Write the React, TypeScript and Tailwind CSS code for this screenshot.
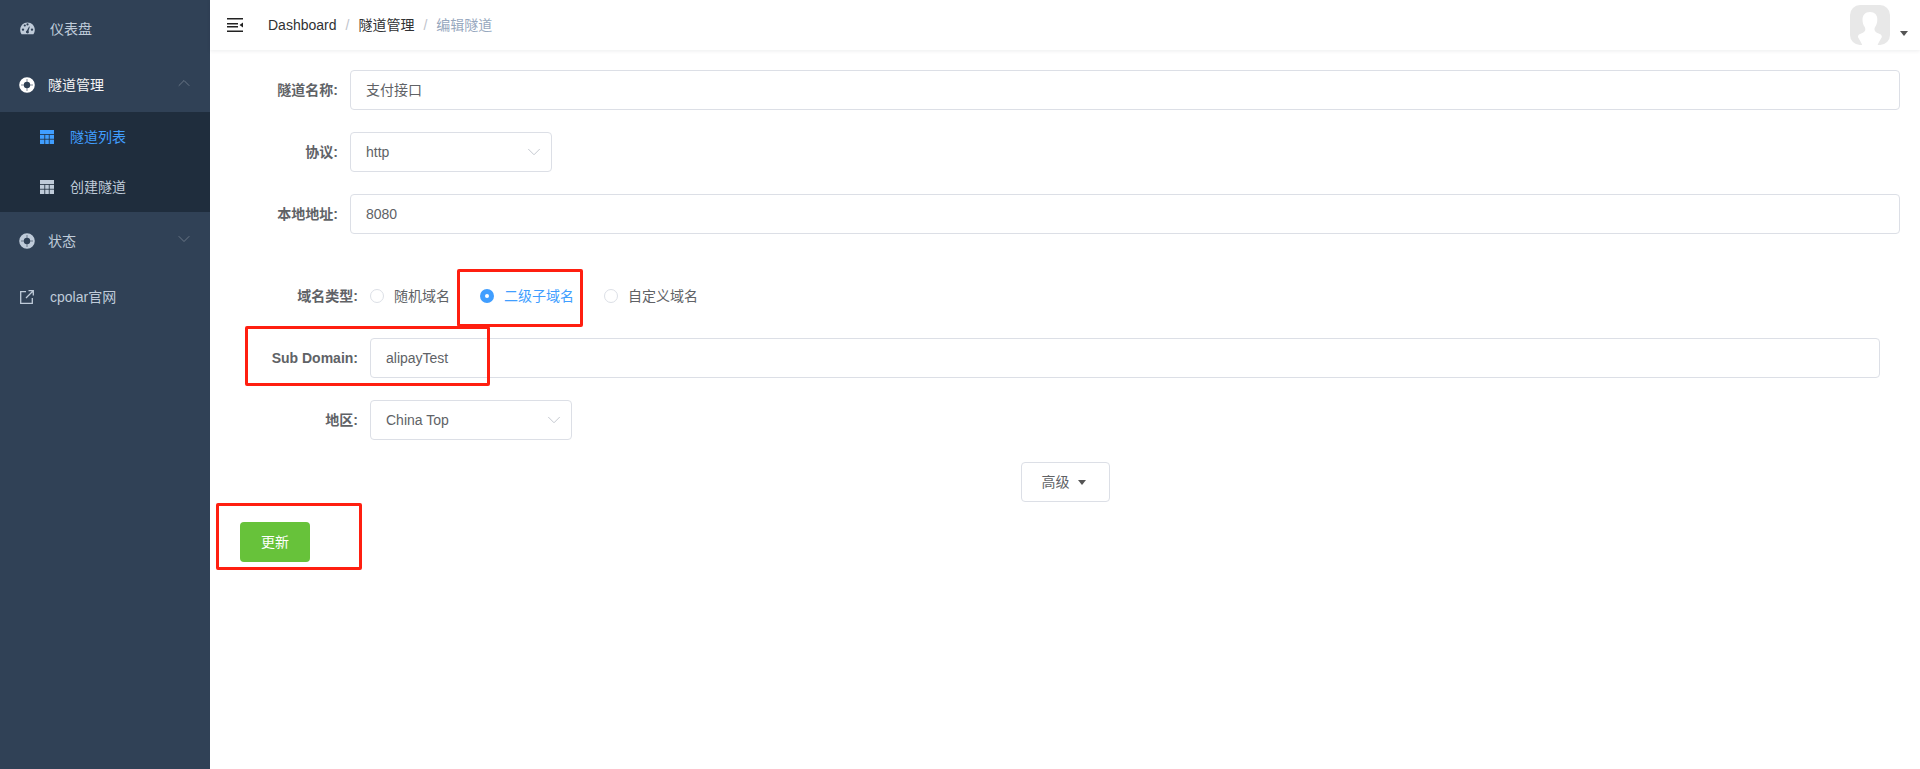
import { ChevronDown, ChevronUp } from "lucide-react";

const FONT = "font-['Liberation_Sans','Noto_Sans_CJK_SC',sans-serif]";

function GaugeIcon() {
  return (
    <svg width="15" height="13" viewBox="0 0 15 13" className="shrink-0">
      <path
        fillRule="evenodd"
        fill="#bfcbd9"
        d="M7.5 0.5C3.4 0.5 0.2 3.7 0.2 7.8c0 1.7 .5 3.2 1.4 4.4h11.8c.9-1.2 1.400-2.700 1.400-4.400C14.800 3.700 11.600 .5 7.500 .5zM3 8.800a1.200 1.200 0 1 1 0-2.400 1.200 1.200 0 0 1 0 2.400zM4.800 4.600a1.100 1.100 0 1 1 0-2.200 1.100 1.100 0 0 1 0 2.200zM7.500 3.500a1.100 1.100 0 1 1 0-2.200 1.100 1.100 0 0 1 0 2.200zM8.900 10.600a1.600 1.600 0 0 1-3-.9c.1-.6.5-1 1-1.200l2.200-4.100.7.3-1.300 4.400c.4.4.5 1 .4 1.500zM12 8.800a1.200 1.200 0 1 1 0-2.400 1.200 1.200 0 0 1 0 2.400z"
      />
    </svg>
  );
}

function RingIcon({ active }: { active?: boolean }) {
  return (
    <svg width="16" height="16" viewBox="0 0 16 16" className="shrink-0">
      <circle cx="8" cy="8" r="5.5" fill="none" stroke={active ? "#ffffff" : "#bfcbd9"} strokeWidth="4.6" />
      <path d="M2 8h3M11 8h3M8 2v3M8 11v3" stroke="#304156" strokeWidth="0.6" />
    </svg>
  );
}

function TableIcon({ color }: { color: string }) {
  return (
    <svg width="14" height="14" viewBox="0 0 14 14" className="shrink-0">
      <rect width="14" height="14" fill={color} />
      <path d="M0 4.500h14M0 9.250h14M4.750 4.500v9.500M9.250 4.500v9.500" stroke="#1f2d3d" strokeWidth="0.8" />
    </svg>
  );
}

function ExternalIcon() {
  return (
    <svg width="14" height="14" viewBox="0 0 14 14" fill="none" stroke="#bfcbd9" strokeWidth="1.300" className="shrink-0">
      <path d="M6 1.700H.7v11.600h11.600V8" />
      <path d="M6 8l7-7M8.500 .7h4.800v4.800" />
    </svg>
  );
}

function MenuFoldIcon() {
  return (
    <svg width="16" height="14" viewBox="0 0 16 14" className="shrink-0">
      <path fill="#222222" d="M0 0h16v1.600H0zM0 5h11v1.600H0zM0 8h11v1.600H0zM0 12.400h16V14H0zM12.500 7l3.500-2.600v5.200z" />
    </svg>
  );
}

function Avatar() {
  return (
    <svg width="40" height="40" viewBox="0 0 40 40" className="rounded-[10px]">
      <rect width="40" height="40" fill="#e8e8e8" />
      <path
        fill="#ffffff"
        d="M20 7c-5 0-7.500 3.500-7.500 7.500 0 3 .8 5.500 2.200 7.500.6 1 .8 2.200.4 3.500-.8 1.800-3 2.800-6.100 4-.6.4-.9 1.500-1.100 2.500 1.500 3 3.500 5.500 4.500 8.500h15c1-3 3-5.500 4.500-8.500-.2-1-.5-2.100-1.100-2.500-3.100-1.200-5.300-2.200-6.100-4-.4-1.300-.2-2.500.4-3.500 1.400-2 2.200-4.500 2.200-7.500C27.500 10.500 25 7 20 7z"
      />
    </svg>
  );
}

function TextInput({ value }: { value: string }) {
  return (
    <div className="flex-1 h-10 flex items-center px-[15px] bg-white border border-[#dcdfe6] rounded text-sm text-[#606266]">
      {value}
    </div>
  );
}

function SelectBox({ value }: { value: string }) {
  return (
    <div className="w-[202px] h-10 flex items-center justify-between pl-[15px] pr-[6px] bg-white border border-[#dcdfe6] rounded text-sm text-[#606266]">
      <span>{value}</span>
      <ChevronDown size={22} strokeWidth={1} color="#c0c4cc" />
    </div>
  );
}

function FormRow({ label, children }: { label: string; children: React.ReactNode }) {
  return (
    <div className="flex items-center h-10 mb-[22px]">
      <label className="w-[120px] pr-3 text-right text-sm font-bold text-[#606266] shrink-0">{label}</label>
      {children}
    </div>
  );
}

function Radio({ label, checked }: { label: string; checked?: boolean }) {
  return (
    <div className="flex items-center mr-[30px]">
      {checked ? (
        <span className="w-[14px] h-[14px] rounded-full bg-[#409eff] flex items-center justify-center">
          <span className="w-1 h-1 rounded-full bg-white" />
        </span>
      ) : (
        <span className="w-[14px] h-[14px] rounded-full bg-white border border-[#dcdfe6]" />
      )}
      <span className={checked ? "pl-[10px] text-sm text-[#409eff]" : "pl-[10px] text-sm text-[#606266]"}>{label}</span>
    </div>
  );
}

export default function App() {
  return (
    <div className={`${FONT} relative flex w-full h-[769px] overflow-hidden bg-white`}>
      {/* 侧边栏 */}
      <aside className="w-[210px] shrink-0 bg-[#304156] text-sm text-[#bfcbd9]">
        <div className="h-14 flex items-center pl-5 pt-px">
          <GaugeIcon />
          <span className="ml-[15px]">仪表盘</span>
        </div>
        <div className="h-14 flex items-center pl-[19px] pr-4 pt-[2px] text-[#f4f4f5]">
          <RingIcon active />
          <span className="ml-[13px] flex-1">隧道管理</span>
          <ChevronUp size={20} strokeWidth={1} color="#75818f" className="mb-1" />
        </div>
        <div className="bg-[#1f2d3d]">
          <div className="h-[50px] flex items-center pl-10 text-[#409eff]">
            <TableIcon color="#409eff" />
            <span className="ml-4">隧道列表</span>
          </div>
          <div className="h-[50px] flex items-center pl-10">
            <TableIcon color="#bfcbd9" />
            <span className="ml-4">创建隧道</span>
          </div>
        </div>
        <div className="h-14 flex items-center pl-[19px] pr-4 pt-[2px]">
          <RingIcon />
          <span className="ml-[13px] flex-1">状态</span>
          <ChevronDown size={20} strokeWidth={1} color="#75818f" className="mb-1" />
        </div>
        <div className="h-14 flex items-center pl-5 pt-px">
          <ExternalIcon />
          <span className="ml-4">cpolar官网</span>
        </div>
      </aside>

      <div className="flex-1 min-w-0">
        {/* 顶部导航 */}
        <header className="h-[50px] flex items-center bg-white shadow-[0_1px_4px_rgba(0,21,41,0.08)] pl-[17px] pr-3 text-sm">
          <MenuFoldIcon />
          <nav className="ml-[25px] flex items-center text-[#303133]">
            <span>Dashboard</span>
            <span className="mx-[9px] text-[#c0c4cc]">/</span>
            <span>隧道管理</span>
            <span className="mx-[9px] text-[#c0c4cc]">/</span>
            <span className="text-[#97a8be]">编辑隧道</span>
          </nav>
          <div className="ml-auto flex items-end">
            <Avatar />
            <span className="ml-[10px] mb-[9px] w-0 h-0 border-x-4 border-x-transparent border-t-[5px] border-t-[#555555]" />
          </div>
        </header>

        {/* 表单 */}
        <main className="pt-5 px-5">
          <FormRow label="隧道名称:">
            <TextInput value="支付接口" />
          </FormRow>
          <FormRow label="协议:">
            <SelectBox value="http" />
          </FormRow>
          <FormRow label="本地地址:">
            <TextInput value="8080" />
          </FormRow>

          <div className="px-5 pt-5">
            <FormRow label="域名类型:">
              <Radio label="随机域名" />
              <Radio label="二级子域名" checked />
              <Radio label="自定义域名" />
            </FormRow>
            <FormRow label="Sub Domain:">
              <TextInput value="alipayTest" />
            </FormRow>
            <FormRow label="地区:">
              <SelectBox value="China Top" />
            </FormRow>
          </div>

          <div className="flex justify-center">
            <button className="w-[89px] h-10 pr-[3px] flex items-center justify-center bg-white border border-[#dcdfe6] rounded text-sm text-[#606266]">
              高级
              <span className="ml-2 w-0 h-0 border-x-[4.5px] border-x-transparent border-t-[5px] border-t-[#555555]" />
            </button>
          </div>

          <button className="block mt-5 ml-[10px] w-[70px] h-10 bg-[#67c23a] rounded text-sm text-white">更新</button>
        </main>
      </div>

      {/* 截图上的红色标注框 */}
      <div className="absolute left-[457px] top-[269px] w-[126px] h-[58px] border-[3px] border-[#ff1f10] rounded-[2px]" />
      <div className="absolute left-[245px] top-[326px] w-[245px] h-[60px] border-[3px] border-[#ff1f10] rounded-[2px]" />
      <div className="absolute left-[216px] top-[503px] w-[146px] h-[67px] border-[3px] border-[#ff1f10] rounded-[2px]" />
    </div>
  );
}
